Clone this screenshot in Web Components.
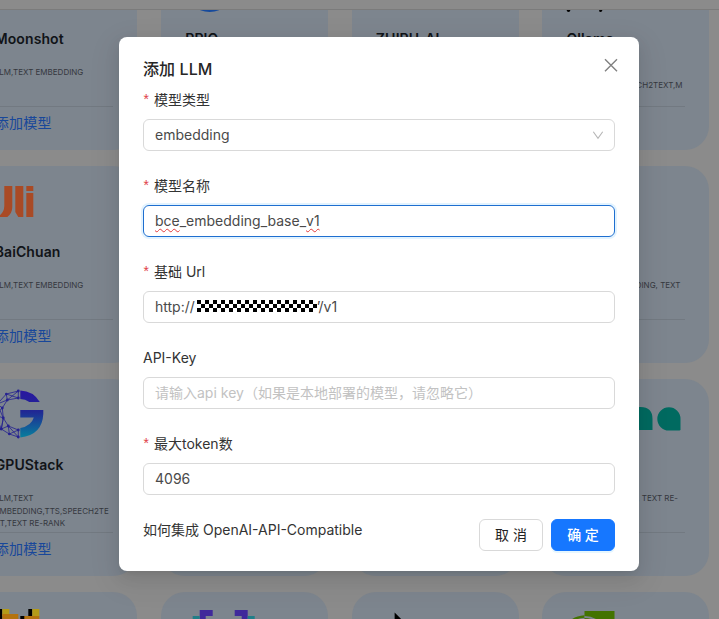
<!DOCTYPE html>
<html lang="zh-CN">
<head>
<meta charset="utf-8">
<title>添加 LLM</title>
<style>
html,body{margin:0;height:100%;overflow:hidden}
body{font-family:Inter,"Noto Sans CJK SC",sans-serif;font-size:14px;line-height:22px;color:#333;background:#8b8b8b}
</style>
</head>
<body>
<model-page></model-page>
<script>
const define = (name, html, setup) => customElements.define(name, class extends HTMLElement {
  connectedCallback() {
    if (this.shadowRoot) return;
    const root = this.attachShadow({ mode: 'open' });
    const t = document.createElement('template');
    t.innerHTML = html;
    root.append(t.content.cloneNode(true));
    if (setup) setup(this, root);
  }
});

define('model-card', `<style>
:host{display:block;box-sizing:border-box;height:197px;border-radius:24px;background:#7d858e;padding:10px 24px 0;overflow:hidden;white-space:nowrap}
.logo{height:50px}
::slotted(svg){display:block;width:120px;height:50px;overflow:visible}
h3{margin:15px 0 0;height:22px;font-size:14px;line-height:22px;font-weight:600;color:#111418;letter-spacing:.1px}
.tags{height:40px;margin-top:16px;font-size:8px;line-height:12.6px;color:#35383e;width:var(--tw,auto);text-align:var(--ta,left)}
.link{border-top:1px solid #727981;padding-top:5px;color:#18479a;line-height:22px;letter-spacing:.3px}
</style><div class="logo"><slot name="logo"></slot></div><h3></h3><div class="tags"><slot></slot></div><div class="link"></div>`,
(el, r) => {
  r.querySelector('h3').textContent = el.getAttribute('name') || '';
  r.querySelector('.link').textContent = el.getAttribute('action') || '';
});

define('form-field', `<style>
:host{display:block;margin-bottom:24px}
.label{height:22px;margin-bottom:8px;display:flex}
:host([required]) .label::before{content:"*";color:#e0404a;width:11px;text-indent:-1px;font-family:"Liberation Mono",monospace;font-size:14px;line-height:25px}
.box{height:32px;box-sizing:border-box;border:1px solid #d9d9d9;border-radius:6px;padding:0 11px;display:flex;align-items:center;color:#4a4a4a}
:host([focused]) .box{border-color:#1e6fd0;box-shadow:0 0 0 2px #e2f3ff}
:host([muted]) .box{color:#c2c2c2}
::slotted(.arrow){margin:0 -1px 0 auto}
::slotted(.mosaic){flex:none;width:120px;height:12px;margin:0 0 2px 2px}
::slotted(.typo){text-decoration:underline wavy #e23a3a 1px;text-decoration-skip-ink:none;text-underline-offset:2px}
</style><div class="label"></div><div class="box"><slot></slot></div>`,
(el, r) => { r.querySelector('.label').textContent = el.getAttribute('label'); });

define('ui-button', `<style>
:host{display:flex;box-sizing:border-box;width:64px;height:32px;border:1px solid #d9d9d9;border-radius:6px;align-items:center;justify-content:center;background:#fff;color:#222;white-space:pre}
:host([primary]){background:#1677ff;border-color:#1677ff;color:#fff;font-weight:500;box-shadow:0 2px 0 #e6f7ff}
</style><slot></slot>`);

define('llm-dialog', `<style>
:host{display:block;box-sizing:border-box;width:520px;height:534px;border-radius:8px;background:#fff;padding:20px 24px;box-shadow:0 6px 16px rgba(0,0,0,.08),0 3px 6px -4px rgba(0,0,0,.12),0 9px 28px 8px rgba(0,0,0,.05)}
header{display:flex;justify-content:space-between;height:32px}
h2{margin:0;font-size:16px;line-height:24px;font-weight:500;color:#262626;letter-spacing:.1px}
header svg{margin:1px -3px 0 0}
footer{display:flex;gap:8px}
footer span{margin-right:auto}
</style>
<header><h2>添加 LLM</h2><svg width="14" height="14" viewBox="0 0 14 14" fill="none" stroke="#808080" stroke-width="1.4"><path d="M1 1.3L13 13.3M13 1.3L1 13.3"/></svg></header>
<form-field label="模型类型" required><span>embedding</span><svg class="arrow" width="12" height="12" viewBox="0 0 12 12" fill="none" stroke="#b5b5b5" stroke-width="1.1"><path d="M1.3 2.7L6 9.2L10.7 2.7"/></svg></form-field>
<form-field label="模型名称" required focused><span class="typo">bce</span><span>_embedding_base_</span><span class="typo">v1</span></form-field>
<form-field label="基础 Url" required><span>http://</span><svg class="mosaic" viewBox="0 0 120 12" shape-rendering="crispEdges"><defs><pattern id="c" width="8" height="8" patternUnits="userSpaceOnUse"><rect width="8" height="8" fill="#fff"/><path d="M0 0h4v4H0zM4 4h4v4H4z"/></pattern></defs><rect width="120" height="12" fill="url(#c)"/></svg><span>’/v1</span></form-field>
<form-field label="API-Key" muted><span>请输入api key（如果是本地部署的模型，请忽略它）</span></form-field>
<form-field label="最大token数" required><span>4096</span></form-field>
<footer><span>如何集成 OpenAI-API-Compatible</span><ui-button>取 消</ui-button><ui-button primary>确 定</ui-button></footer>`);

define('model-page', `<style>
:host{display:grid;width:719px;height:619px;overflow:hidden}
:host>*{grid-area:1/1}
.page{display:flex;flex-direction:column;height:619px;overflow:hidden;grid-area:1/1}
.bar{flex:none;height:9px;border-bottom:1px solid #7b7b7b}
.view{flex:1;min-height:0;overflow:hidden}
.grid{display:grid;grid-template-columns:repeat(4,166.7px);grid-auto-rows:197px;gap:16px 23.9px;margin:-57px 0 0 -29.3px}
llm-dialog{margin:37px 0 0 119px;z-index:1;grid-area:1/1}
.end{--ta:right}
</style>
<div class="page"><div class="bar"></div><div class="view"><div class="grid">
<model-card name="Moonshot" action="添加模型">LLM,TEXT EMBEDDING</model-card>
<model-card name="PPIO"><svg slot="logo" viewBox="185.3 -37 120 50"><circle cx="210" cy="-12" r="24" fill="#164a9c"/></svg></model-card>
<model-card name="ZHIPU-AI"></model-card>
<model-card name="Ollama"><br>EMBEDDING,SPEECH2TEXT,M<svg slot="logo" viewBox="566.5 -37 120 50"><path d="M567 5h4v4q0 3-2 3t-2-3zM600 5h3v4q0 3-2 3t-1-3z"/></svg></model-card>
<model-card name="BaiChuan" action="添加模型">LLM,TEXT EMBEDDING<svg slot="logo" viewBox="-5.3 176 120 50" fill="#a94a25"><path d="M4 186h8v21q0 6-5 10H-3q7-4 7-11zM15 186h8v31h-5l-3-5zM26 186h7v5h-7zM26 193h7v24h-7z"/></svg></model-card>
<model-card></model-card><model-card></model-card>
<model-card class="end" style="--tw:114px">TEXT EMBEDDING, TEXT</model-card>
<model-card name="GPUStack" action="添加模型">LLM,TEXT<br>EMBEDDING,TTS,SPEECH2TE<br>XT,TEXT RE-RANK<svg slot="logo" viewBox="-5.3 389 120 50"><defs><linearGradient id="g" x2="0" y2="1"><stop stop-color="#2916a0"/><stop offset=".45" stop-color="#202894"/><stop offset="1" stop-color="#087f9d"/></linearGradient></defs>
<path fill="url(#g)" d="M20 390.5Q33 391 39.5 402H29Q25 399 20 399zM20 410H43V414Q42 435 20 437.5V428Q31 426 33.5 417.5H20z"/>
<g fill="none" stroke="#252191" stroke-width=".8"><path d="M18 391L6 394L-3 404L-5 415L1 429L9 434L18 437L18 430L8 426L3 418L2 408L7 400L18 398L6 394L7 400L-3 404L2 408L-5 415L3 418L1 429L8 426L9 434L18 430M18 391V398M18 391L7 400M-3 404L3 418M1 429L3 418M8 426L18 437"/></g>
<g fill="#252191"><circle cx="18" cy="391" r="1.4"/><circle cx="6" cy="394" r="1.3"/><circle cx="18" cy="398" r="1.4"/><circle cx="7" cy="400" r="1.4"/><circle cx="2" cy="408" r="1.4"/><circle cx="3" cy="418" r="1.4"/><circle cx="8" cy="426" r="1.4"/><circle cx="1" cy="429" r="1.4"/><circle cx="9" cy="434" r="1.3"/><circle cx="18" cy="430" r="1.4"/><circle cx="18" cy="437" r="1.4"/></g></svg></model-card>
<model-card></model-card><model-card></model-card>
<model-card class="end" style="--tw:111.5px">TEXT EMBEDDING, TEXT RE-<svg slot="logo" viewBox="566.5 389 120 50" fill="#006a60"><path d="M653 430V419Q653 407 641 407H630V430zM681 430V419A11.6 11.6 0 1 0 669.5 430.5H680z"/></svg></model-card>
<model-card><svg slot="logo" viewBox="-5.3 602 120 50"><path d="M-5 609h7v20h-7zM28 609h4v20h-4zM20 616h9v8h-9z"/><path fill="#b49b18" d="M2 609h7v7H2zM32 609h7v7h-7z"/><path fill="#b4730f" d="M2 614h16v8H2zM24 616h15v8H24z"/></svg></model-card>
<model-card><svg slot="logo" viewBox="185.3 602 120 50"><path fill="#40299b" d="M200 610h13v6h-7v8h-6zM235 610h13v14h-6v-8h-7z"/><path fill="#207e88" d="M193 616h7v8h-7zM248 616h7v8h-7z"/></svg></model-card>
<model-card><svg slot="logo" viewBox="375.9 602 120 50"><path d="M394.5 612.5V630H412z"/></svg></model-card>
<model-card><svg slot="logo" viewBox="566.5 602 120 50"><path fill="#437300" d="M585 611h30v30h-30z"/><path fill="none" stroke="#437300" stroke-width="2.5" d="M571 622Q576 617 585 616.5"/><path fill="none" stroke="#7d858e" stroke-width="2" d="M585 617Q594 617 600 623"/></svg></model-card>
</div></div></div>
<llm-dialog></llm-dialog>`);
</script>
</body>
</html>
